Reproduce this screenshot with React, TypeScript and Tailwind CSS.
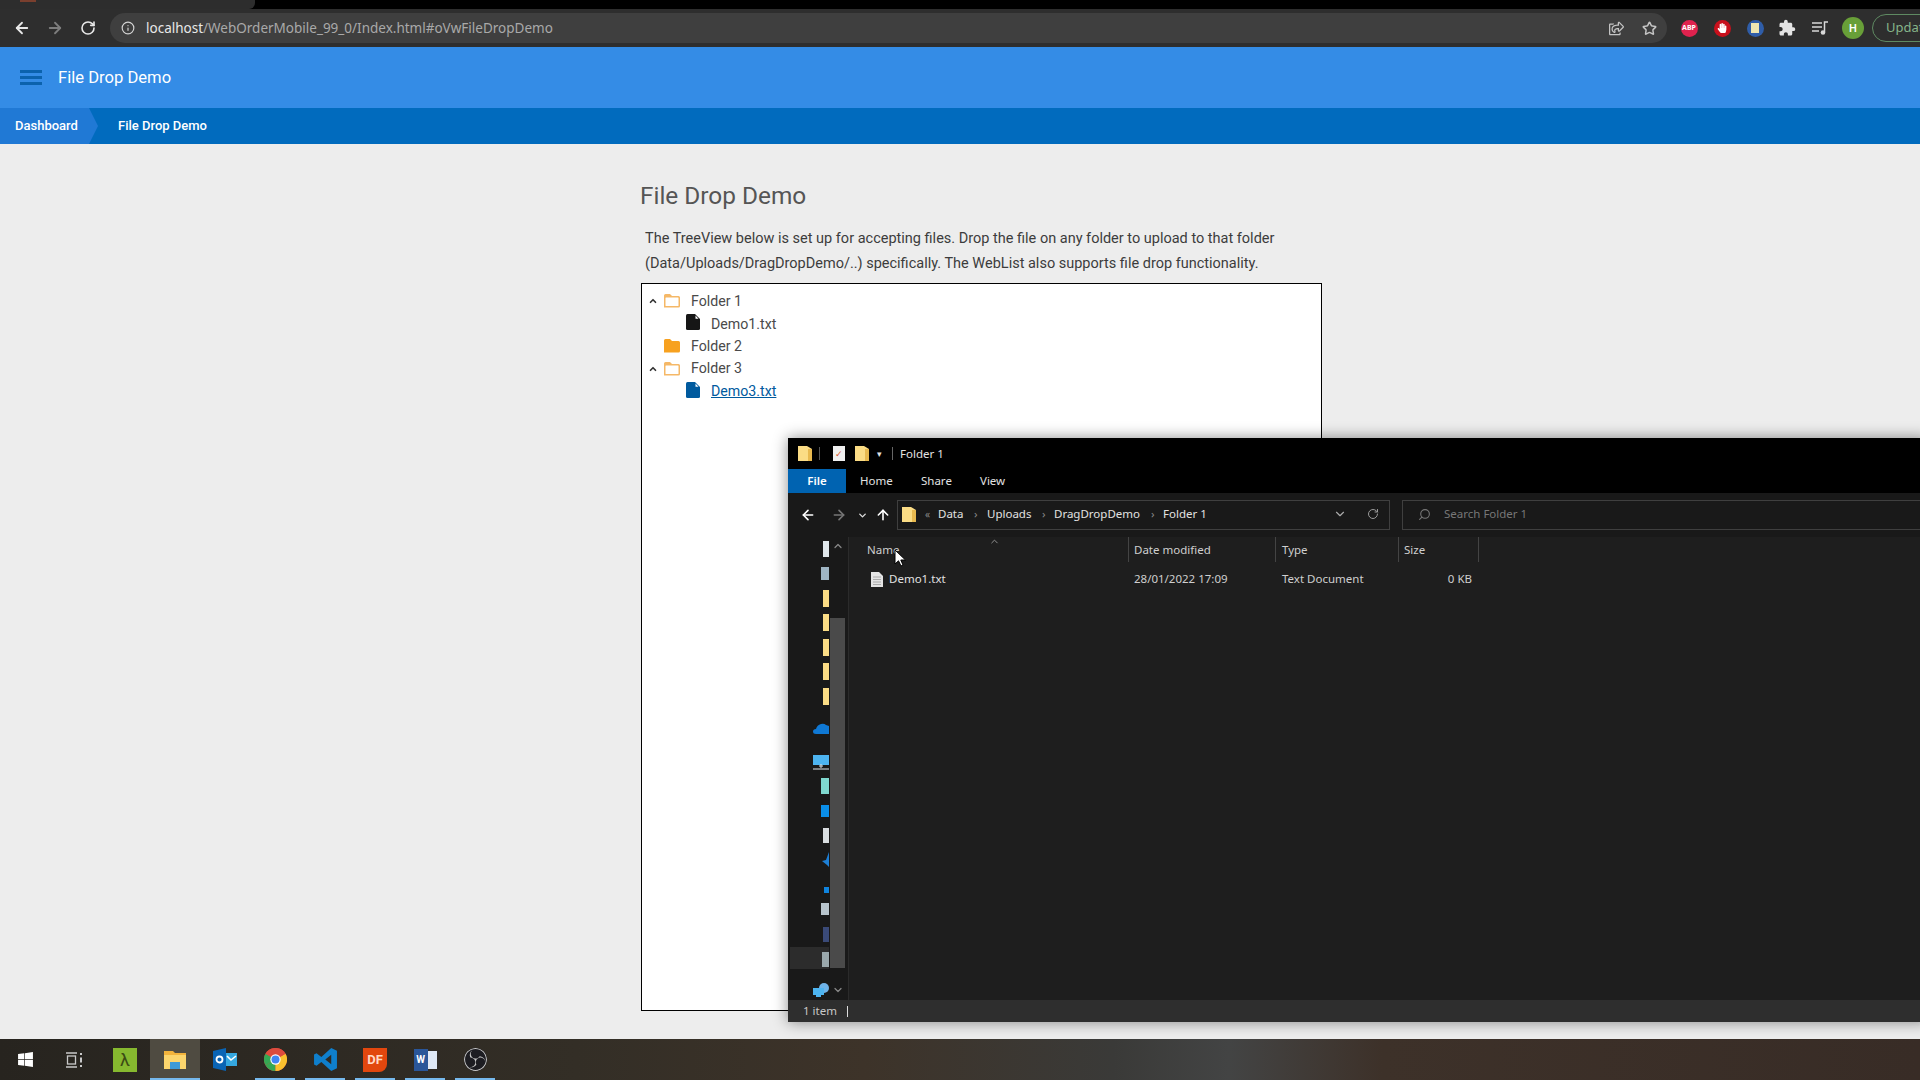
import { ArrowLeft, ArrowRight, ArrowUp, ChevronDown, ChevronUp, Info, RotateCw, Search, Star } from "lucide-react";
import { FaHandPaper, FaRegShareSquare, FaWindows } from "react-icons/fa";
import { MdExtension } from "react-icons/md";
import { SiObsstudio } from "react-icons/si";

const segoe = "font-['Noto_Sans',sans-serif]";

function FolderOpen() {
  return (
    <svg width="18" height="16" viewBox="0 0 18 16" className="shrink-0">
      <path d="M1 14.5V2.5Q1 1 2.5 1H7L9 3H15.5Q17 3 17 4.5V13Q17 14.5 15.5 14.5Z" fill="#f5b867" />
      <rect x="2.5" y="4.5" width="13" height="8.5" rx="0.5" fill="#fff" />
    </svg>
  );
}

function FolderClosed() {
  return (
    <svg width="18" height="16" viewBox="0 0 18 16" className="shrink-0">
      <path d="M1 14.5V2.5Q1 1 2.5 1H7L9 3H15.5Q17 3 17 4.5V13Q17 14.5 15.5 14.5Z" fill="#f7a11f" />
    </svg>
  );
}

function FileIcon({ color }: { color: string }) {
  return (
    <svg width="14" height="16" viewBox="0 0 14 16" className="-mt-[3px] shrink-0">
      <path d="M1.5 0H9L14 5V14.5Q14 16 12.5 16H1.5Q0 16 0 14.5V1.5Q0 0 1.5 0Z" fill={color} />
      <path d="M9.5 1.5L12.5 4.7H9.5Z" fill="#fff" />
    </svg>
  );
}

function TreeRow({ caret, children }: { caret?: boolean; children: React.ReactNode }) {
  return (
    <div className="flex h-[22.6px] items-center">
      <div className="flex w-[21px] justify-center">
        {caret && <ChevronUp size={10} strokeWidth={4} className="text-[#333]" />}
      </div>
      {children}
    </div>
  );
}

function ExtFolder({ className = "" }: { className?: string }) {
  return (
    <svg width="14" height="17" viewBox="0 0 14 17" className={`shrink-0 ${className}`}>
      <path d="M0 1H9L14 4V16H0Z" fill="#fbdc85" />
      <path d="M10 4H14V16H10Z" fill="#e8b94f" />
    </svg>
  );
}

// nav pane icons are clipped by the scrollbar, only the right edge of each shows
const navIcons = [
  { y: 541, h: 16, w: 6, color: "#dfe6ea" },
  { y: 567, h: 13, w: 8, color: "#9fb5c4" },
  { y: 590, h: 17, w: 6, color: "#fbdc85" },
  { y: 614, h: 17, w: 6, color: "#fbdc85" },
  { y: 639, h: 17, w: 6, color: "#fbdc85" },
  { y: 663, h: 17, w: 6, color: "#fbdc85" },
  { y: 688, h: 17, w: 6, color: "#fbdc85" },
  { y: 723, h: 11, w: 0, color: "cloud" },
  { y: 755, h: 15, w: 0, color: "pc" },
  { y: 778, h: 16, w: 8, color: "#7fd8cf" },
  { y: 805, h: 12, w: 8, color: "#0a8ee8" },
  { y: 828, h: 15, w: 6, color: "#d9dde0" },
  { y: 852, h: 15, w: 0, color: "tri" },
  { y: 887, h: 6, w: 5, color: "#0f84de" },
  { y: 903, h: 12, w: 8, color: "#b7c4cc" },
  { y: 927, h: 15, w: 6, color: "#3a4a78" },
  { y: 952, h: 15, w: 7, color: "#9aa8ac" },
  { y: 983, h: 14, w: 0, color: "net" },
];

function NavIcon({ color, w, h }: { color: string; w: number; h: number }) {
  if (color === "cloud") {
    return (
      <svg width="16" height="11" viewBox="0 0 16 11">
        <path d="M3 11Q0 11 0 8.5Q0 6 3 6Q4 2 8 1Q11 0 13 2L16 3V11Z" fill="#0f78d4" />
      </svg>
    );
  }
  if (color === "pc") {
    return (
      <svg width="16" height="15" viewBox="0 0 16 15">
        <rect x="0" y="0" width="16" height="10" fill="#4db4f0" />
        <path d="M7 10H9V12H7ZM0 14H16" stroke="#dfe6ea" strokeWidth="1" />
      </svg>
    );
  }
  if (color === "tri") {
    return (
      <svg width="7" height="15" viewBox="0 0 7 15">
        <path d="M7 0V15L5 13L0 9L4 8Z" fill="#1d7fd6" />
      </svg>
    );
  }
  if (color === "net") {
    return (
      <svg width="16" height="14" viewBox="0 0 16 14">
        <circle cx="11" cy="5" r="5" fill="#6fb3e8" />
        <rect x="0" y="5" width="11" height="7" fill="#4db4f0" />
        <path d="M3 13H8" stroke="#4db4f0" strokeWidth="2" />
      </svg>
    );
  }
  return <div style={{ backgroundColor: color, height: h, width: w }} />;
}

function TaskButton({ active, line, children }: { active?: boolean; line?: boolean; children: React.ReactNode }) {
  return (
    <div className={`relative flex h-full w-[50px] items-center justify-center ${active ? "bg-[#4f4b41]" : ""}`}>
      {children}
      {line && <div className="absolute bottom-0 left-[5px] right-[5px] h-[2px] bg-[#76b9ed]" />}
      {active && <div className="absolute bottom-0 left-0 right-0 h-[2px] bg-[#76b9ed]" />}
    </div>
  );
}

export default function App() {
  return (
    <div className="relative flex h-[1080px] w-[1920px] flex-col overflow-hidden bg-[#ededed] font-['Roboto',sans-serif]">
      {/* Chrome tab strip */}
      <div className="h-[9px] bg-black">
        <div className="h-full w-[255px] rounded-br-md bg-[#2d2d2d] pl-[20px]">
          <div className="h-[2px] w-[16px] bg-[#7a3f2e]" />
        </div>
      </div>

      {/* Chrome toolbar */}
      <div className={`flex h-[38px] items-center bg-[#2e2e2e] ${segoe}`}>
        <div className="flex w-[110px] shrink-0 items-center pl-[13px] text-[#e8e8e8]">
          <ArrowLeft size={18} strokeWidth={2.4} />
          <ArrowRight size={18} strokeWidth={2.4} className="ml-[15px] text-[#7d7d7d]" />
          <RotateCw size={16} strokeWidth={2.4} className="ml-[16px]" />
        </div>
        <div className="flex h-[30px] w-[1557px] shrink-0 items-center rounded-full bg-[#3f3f3f] pl-[11px]">
          <Info size={14} className="text-[#d4d4d4]" />
          <div className="ml-[11px] whitespace-nowrap text-[13.5px] text-[#a9a9a9]">
            <span className="text-[#e8e8e8]">localhost</span>/WebOrderMobile_99_0/Index.html#oVwFileDropDemo
          </div>
          <div className="ml-auto flex items-center gap-[18px] pr-[10px] text-[#c4c4c4]">
            <FaRegShareSquare size={15} />
            <Star size={15} strokeWidth={2.4} />
          </div>
        </div>
        <div className="ml-[13.5px] flex shrink-0 items-center gap-[16px]">
          <div className="flex h-[17px] w-[17px] items-center justify-center rounded-full bg-[#e0224e] text-[7px] font-bold text-white">ABP</div>
          <div className="flex h-[17px] w-[17px] items-center justify-center rounded-full bg-[#c8101c]">
            <FaHandPaper size={10} className="text-white" />
          </div>
          <div className="flex h-[17px] w-[17px] items-center justify-center rounded-full bg-[#2f5da8]">
            <div className="h-[10px] w-[8px] bg-[#eee6b0]" />
          </div>
          <MdExtension size={18} className="-mx-[1.5px] text-[#e4e4e4]" />
          <svg width="16" height="14" viewBox="0 0 16 14" className="ml-[1px] text-[#d8d8d8]">
            <path d="M0 2H10M0 6H10M0 10H7" stroke="currentColor" strokeWidth="1.6" />
            <path d="M12.5 11V1H16" stroke="currentColor" strokeWidth="1.5" fill="none" />
            <circle cx="11" cy="11.5" r="2.3" fill="currentColor" />
          </svg>
        </div>
        <div className="ml-[14.5px] flex h-[22px] w-[22px] shrink-0 items-center justify-center rounded-full bg-[#689f38] text-[11px] font-semibold text-white">H</div>
        <div className="ml-[8px] flex h-[28px] w-[80px] shrink-0 items-center rounded-l-full border border-[#5f8a62] pl-[13px] text-[13px] text-[#86b58a]">
          Update
        </div>
      </div>

      {/* App header */}
      <div className="flex h-[61px] items-center bg-[#348ce6] pl-[20px] text-white">
        <div className="flex h-[15px] w-[22px] flex-col justify-between">
          <div className="h-[3px] bg-[#0b62ad]" />
          <div className="h-[3px] bg-[#0b62ad]" />
          <div className="h-[3px] bg-[#0b62ad]" />
        </div>
        <div className="ml-[16px] pt-[2px] text-[16.6px]">File Drop Demo</div>
      </div>

      {/* Breadcrumb */}
      <div className="flex h-[36px] items-center bg-[#016bbe] text-[13px] font-medium text-white">
        <div className="relative flex h-full w-[89px] items-center bg-[#2079d5] pl-[15px]">
          Dashboard
          <div className="absolute left-full top-0 h-0 w-0 border-y-[18px] border-l-[9px] border-y-transparent border-l-[#2079d5]" />
        </div>
        <div className="ml-[29px]">File Drop Demo</div>
      </div>

      {/* Page content */}
      <div className="flex flex-1 flex-col pl-[640px]">
        <h1 className="mt-[37px] text-[24.4px] leading-[30px] text-[#555]">File Drop Demo</h1>
        <p className="ml-[5px] mt-[16px] w-[660px] text-[14.5px] leading-[24.5px] text-[#3c3c3c]">
          The TreeView below is set up for accepting files. Drop the file on any folder to upload to that folder (Data/Uploads/DragDropDemo/..) specifically. The WebList also supports file drop functionality.
        </p>
        <div className="ml-[1px] mt-[7px] h-[728px] w-[681px] border border-black bg-white pt-[6px] text-[14.2px] text-[#4a4a4a]">
          <TreeRow caret>
            <FolderOpen />
            <span className="ml-[10px]">Folder 1</span>
          </TreeRow>
          <TreeRow>
            <div className="ml-[23px] flex items-center">
              <FileIcon color="#161616" />
              <span className="ml-[11px] pt-[1px]">Demo1.txt</span>
            </div>
          </TreeRow>
          <TreeRow>
            <FolderClosed />
            <span className="ml-[10px]">Folder 2</span>
          </TreeRow>
          <TreeRow caret>
            <FolderOpen />
            <span className="ml-[10px]">Folder 3</span>
          </TreeRow>
          <TreeRow>
            <div className="ml-[23px] flex items-center">
              <FileIcon color="#005a9e" />
              <span className="ml-[11px] text-[#005a9e] underline">Demo3.txt</span>
            </div>
          </TreeRow>
        </div>
      </div>

      {/* Explorer window */}
      <div className={`absolute left-[788px] top-[438px] flex h-[584px] w-[1140px] flex-col bg-black text-[11.5px] text-[#e2e2e2] shadow-[0_0_14px_rgba(0,0,0,0.45)] ${segoe}`}>
        <div className="flex h-[31px] items-center pl-[10px]">
          <ExtFolder />
          <div className="ml-[7px] h-[13px] w-px bg-[#555]" />
          <div className="ml-[13px] flex h-[15px] w-[12px] items-center justify-center bg-[#f0f0f0] text-[9px] leading-none text-[#d9542f]">✓</div>
          <ExtFolder className="ml-[10px]" />
          <div className="ml-[8px] w-[8px] text-[9px] leading-none">▾</div>
          <div className="ml-[7px] h-[13px] w-px bg-[#666]" />
          <span className="ml-[7px]">Folder 1</span>
        </div>
        <div className="flex h-[24px] items-center">
          <div className="flex h-full w-[58px] items-center justify-center bg-[#0063b1] font-semibold text-white">File</div>
          <span className="ml-[14px] w-[61px]">Home</span>
          <span className="w-[59px]">Share</span>
          <span>View</span>
        </div>
        <div className="flex h-[44px] items-center bg-[#191919]">
          <ArrowLeft size={16} strokeWidth={2.4} className="ml-[12px] text-white" />
          <ArrowRight size={16} strokeWidth={2.4} className="ml-[15px] text-[#777]" />
          <ChevronDown size={11} strokeWidth={3} className="ml-[10px] text-[#ddd]" />
          <ArrowUp size={16} strokeWidth={2.4} className="ml-[7px] text-white" />
          <div className="ml-[6px] flex h-[30px] w-[493px] shrink-0 items-center border border-[#3f3f3f] pb-[2px] pl-[4px]">
            <ExtFolder />
            <span className="ml-[9px] w-[13px] text-[10px] text-[#888]">«</span>
            <span className="w-[36px]">Data</span>
            <span className="w-[13px] text-[#888]">›</span>
            <span className="w-[55px]">Uploads</span>
            <span className="w-[12px] text-[#888]">›</span>
            <span className="w-[97px]">DragDropDemo</span>
            <span className="w-[12px] text-[#888]">›</span>
            <span>Folder 1</span>
            <ChevronDown size={14} className="ml-auto text-[#aaa]" />
            <div className="ml-[9px] flex h-full w-[33px] items-center justify-center">
              <RotateCw size={12} className="text-[#9a9a9a]" />
            </div>
          </div>
          <div className="ml-[12px] flex h-[30px] flex-1 items-center border border-[#3f3f3f] pb-[2px] pl-[15px] text-[#777]">
            <Search size={13} className="-scale-x-100" />
            <span className="ml-[13px]">Search Folder 1</span>
          </div>
        </div>
        <div className="flex min-h-0 flex-1 bg-[#1e1e1e]">
          {/* Navigation pane */}
          <div className="flex w-[60px] shrink-0 bg-[#191919]">
            <div className="relative flex w-[41px] flex-col items-end pt-[4px]">
              <div className="absolute bottom-[31px] left-[2px] right-0 h-[22px] bg-[#2c2c2c]" />
              {navIcons.map((icon, i) => (
                <div
                  key={icon.y}
                  className="relative flex items-center"
                  style={{ marginTop: i === 0 ? 0 : icon.y - navIcons[i - 1].y - navIcons[i - 1].h, height: icon.h }}
                >
                  <NavIcon color={icon.color} w={icon.w} h={icon.h} />
                </div>
              ))}
            </div>
            <div className="relative ml-[1px] w-[18px]">
              <ChevronUp size={12} strokeWidth={2.5} className="absolute left-[2px] top-[3px] text-[#888]" />
              <div className="absolute bottom-[32px] left-0 top-[81px] w-[15px] bg-[#4a4a4a]" />
              <ChevronDown size={12} strokeWidth={2.5} className="absolute bottom-[4px] left-[2px] text-[#888]" />
            </div>
          </div>
          <div className="w-px bg-[#2b2b2b]" />
          <div className="flex-1 text-[#cfcfcf]">
            <div className="flex h-[25px] items-center">
              <div className="relative flex h-full w-[279px] items-center pl-[18px]">
                Name
                <ChevronUp size={11} className="absolute left-[140px] top-[-1px] text-[#999]" />
              </div>
              <div className="flex h-full w-[147px] items-center border-l border-[#444] pl-[5px]">Date modified</div>
              <div className="flex h-full w-[123px] items-center border-l border-[#444] pl-[6px]">Type</div>
              <div className="flex h-full w-[81px] items-center border-x border-[#444] pl-[5px]">Size</div>
            </div>
            <div className="mt-[5px] flex h-[24px] items-center">
              <div className="flex w-[279px] items-center pl-[22px]">
                <svg width="12" height="15" viewBox="0 0 12 15" className="shrink-0">
                  <path d="M0 0H8L12 4V15H0Z" fill="#e4e4e4" />
                  <path d="M2 5H10M2 7.5H10M2 10H10M2 12.5H10" stroke="#9a9a9a" strokeWidth="0.8" />
                </svg>
                <span className="ml-[6px] text-[#e2e2e2]">Demo1.txt</span>
              </div>
              <div className="w-[147px] pl-[6px]">28/01/2022 17:09</div>
              <div className="w-[123px] pl-[7px]">Text Document</div>
              <div className="w-[81px] pr-[7px] text-right">0 KB</div>
            </div>
          </div>
        </div>
        <div className="flex h-[22px] shrink-0 items-center bg-[#2e2e2e] text-[#c8c8c8]">
          <div className="w-[59px] pl-[15px]">1 item</div>
          <div className="h-[11px] w-px bg-[#ddd]" />
        </div>
      </div>

      {/* Mouse cursor */}
      <svg width="12" height="18" viewBox="0 0 12 18" className="absolute left-[894px] top-[549px]">
        <path d="M1 1V15L4.5 11.8L7 17L9 16L6.8 11H11.5Z" fill="#fff" stroke="#000" strokeWidth="1" />
      </svg>

      {/* Windows taskbar */}
      <div className="flex h-[41px] shrink-0 items-center bg-[linear-gradient(90deg,#27241f_0%,#332e26_30%,#3d3329_45%,#3a3a38_58%,#434444_64%,#3d3129_72%,#382c26_100%)]">
        <div className="flex h-full w-[50px] items-center justify-center">
          <FaWindows size={17} className="text-white" />
        </div>
        <div className="flex h-full w-[50px] items-center justify-center">
          <svg width="18" height="16" viewBox="0 0 18 16" fill="none" stroke="#c9c9c9" strokeWidth="1.3">
            <path d="M0 1H11M0 15H11" />
            <rect x="1.5" y="4" width="8" height="8" />
            <path d="M15 1V3M15 5.5V10.5M15 13V15" strokeWidth="2" />
          </svg>
        </div>
        <TaskButton>
          <div className="flex h-[24px] w-[24px] items-center justify-center bg-[#86b92f] text-[18px] leading-none text-[#3b4a15]">λ</div>
        </TaskButton>
        <TaskButton active>
          <svg width="22" height="19" viewBox="0 0 22 19">
            <path d="M0 1H9L11 3H22V19H0Z" fill="#f2b33c" />
            <path d="M0 5H22V19H0Z" fill="#fbd56d" />
            <rect x="6" y="12" width="10" height="7" fill="#3d9ad6" />
          </svg>
        </TaskButton>
        <TaskButton>
          <svg width="24" height="23" viewBox="0 0 24 23">
            <rect x="11" y="5" width="13" height="13" fill="#35a8e0" />
            <path d="M14 8L18 12L23 8" stroke="#fff" strokeWidth="1.6" fill="none" />
            <path d="M0 3L13 0V23L0 20Z" fill="#0a64b4" />
            <circle cx="6.5" cy="11.5" r="3" fill="none" stroke="#fff" strokeWidth="1.8" />
          </svg>
        </TaskButton>
        <TaskButton line>
          <svg width="23" height="23" viewBox="0 0 24 24">
            <circle cx="12" cy="12" r="12" fill="#dd4b3e" />
            <path d="M12 12L1.6 18A12 12 0 0 0 12 24Z" fill="#35a853" />
            <path d="M12 12L1.6 18A12 12 0 0 1 1.6 6Z" fill="#35a853" />
            <path d="M12 12L12 24A12 12 0 0 0 22.4 6Z" fill="#f9c02e" />
            <path d="M12 12L1.6 6A12 12 0 0 1 22.4 6Z" fill="#dd4b3e" />
            <circle cx="12" cy="12" r="5.4" fill="#fff" />
            <circle cx="12" cy="12" r="4.2" fill="#4285f4" />
          </svg>
        </TaskButton>
        <TaskButton line>
          <svg width="25" height="25" viewBox="0 0 24 24">
            <path d="M17.5 1L23 3.7V20.3L17.5 23L8 14.3L3.4 17.9L1 16.7V7.3L3.4 6.1L8 9.7ZM17.5 7.4L11.8 12L17.5 16.6Z" fill="#0f7fcc" />
          </svg>
        </TaskButton>
        <TaskButton line>
          <div className="flex h-[24px] w-[24px] items-center justify-center rounded-br-lg bg-[#e2470e] text-[13px] font-bold leading-none text-[#ffd9c7]">DF</div>
        </TaskButton>
        <TaskButton line>
          <div className="relative h-[22px] w-[23px]">
            <div className="absolute bottom-[2px] right-0 top-[2px] w-[13px] bg-[#dfe8f5]" />
            <div className="absolute bottom-0 left-0 top-0 flex w-[14px] items-center justify-center bg-[#2a5699] text-[10px] font-bold text-white">W</div>
          </div>
        </TaskButton>
        <TaskButton line>
          <SiObsstudio size={23} className="rounded-full bg-[#1d1d22] text-[#c4c4c4]" />
        </TaskButton>
      </div>
    </div>
  );
}
